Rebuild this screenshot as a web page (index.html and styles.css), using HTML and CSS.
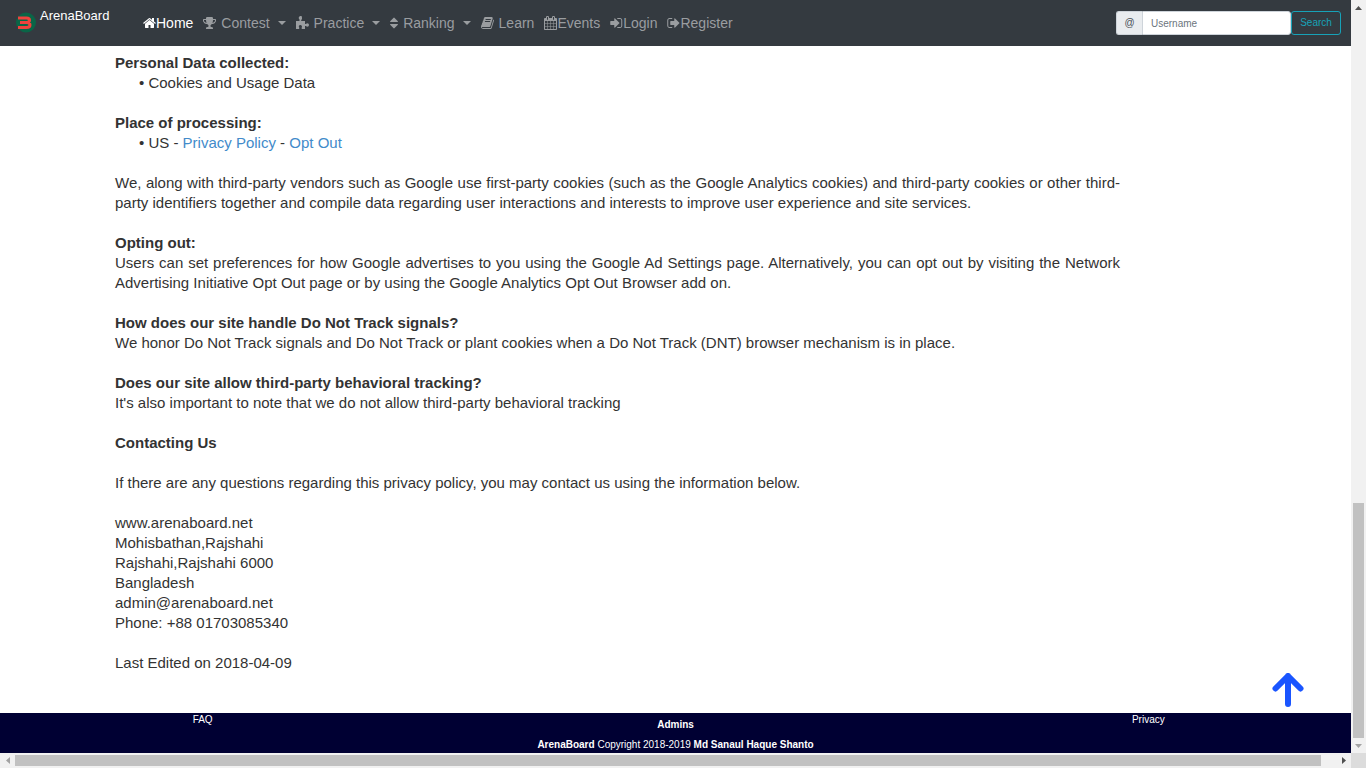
FILE: index.html
```html
<!DOCTYPE html>
<html lang="en">
<head>
<meta charset="utf-8">
<title>ArenaBoard - Privacy Policy</title>
<link rel="stylesheet" href="styles.css">
</head>
<body>
<div class="viewport">
  <div class="page">
    <header class="navbar">
      <a class="brand" href="#">
        <svg class="logo" viewBox="0 0 20 21" aria-hidden="true">
          <circle cx="10" cy="10.500" r="10" fill="#0a6547"/>
          <path d="M0 6h3M0 15h4" stroke="#343a40" stroke-width="1"/>
          <path d="M2 6h8.500q3 0 3 2.200t-3 2.200H4M10.500 10.400q3.500 0 3.500 2.500t-3.500 2.500H2" fill="none" stroke="#f0413d" stroke-width="3"/>
        </svg>
        <span>ArenaBoard</span>
      </a>
      <nav class="menu">
        <a class="item active" href="#"><svg class="icon" viewBox="0 0 1664 1792"><path d="M1408 992v480q0 26-19 45t-45 19h-384v-384h-256v384h-384q-26 0-45-19t-19-45v-480q0-1 .5-3t.5-3l575-474 575 474q1 2 1 6zm223-69l-62 74q-8 9-21 11h-3q-13 0-21-7l-692-577-692 577q-12 8-24 7-13-2-21-11l-62-74q-8-10-7-23.500t11-21.500l719-599q32-26 76-26t76 26l244 204v-195q0-14 9-23t23-9h192q14 0 23 9t9 23v408l219 182q10 8 11 21.500t-7 23.500z"/></svg>Home</a>
        <a class="item spaced" href="#"><svg class="icon" viewBox="64 0 1664 1792"><path d="M522 883q-74-162-74-371h-256v96q0 78 94.500 162t235.500 113zm1078-275v-96h-256q0 209-74 371 141-29 235.500-113t94.500-162zm128-128v128q0 71-41.500 143t-112 130-173 97.500-215.500 44.500q-42 54-95 95-38 34-52.500 72.500t-14.500 89.500q0 54 30.500 91t97.500 37q75 0 133.500 45.500t58.500 114.500v64q0 14-9 23t-23 9h-832q-14 0-23-9t-9-23v-64q0-69 58.500-114.500t133.500-45.500q67 0 97.500-37t30.500-91q0-51-14.500-89.500t-52.500-72.500q-53-41-95-95-113-5-215.500-44.500t-173-97.500-112-130-41.500-143v-128q0-40 28-68t68-28h288v-96q0-66 47-113t113-47h576q66 0 113 47t47 113v96h288q40 0 68 28t28 68z"/></svg>Contest<span class="caret"></span></a>
        <a class="item spaced" href="#"><svg class="icon" viewBox="0 0 13 14"><path d="M0 5h3.500V3.500Q2.700 2.800 2.700 1.800T4.300 0 6 1.800 5.200 3.500V5H9V8h1q.5-.8 1.300-.8Q13 7.200 13 9t-1.700 1.800Q10.500 10.800 10 10H9v3H5.700V11.200Q6.200 10.500 5.700 9.800T4.300 9 3 9.800 3.200 11.200V13H0z"/></svg>Practice<span class="caret"></span></a>
        <a class="item spaced" href="#"><svg class="icon narrow" viewBox="384 0 1024 1792"><path d="M1408 1088q0 26-19 45l-448 448q-19 19-45 19t-45-19l-448-448q-19-19-19-45t19-45 45-19h896q26 0 45 19t19 45zm0-384q0 26-19 45t-45 19h-896q-26 0-45-19t-19-45 19-45l448-448q19-19 45-19t45 19l448 448q19 19 19 45z"/></svg>Ranking<span class="caret"></span></a>
        <a class="item spaced" href="#"><svg class="icon" viewBox="64 0 1664 1792"><path d="M1703 478q40 57 18 129l-275 906q-19 64-76.500 107.500t-122.500 43.500h-923q-77 0-148.500-53.500t-99.500-131.500q-24-67-2-127 0-4 3-27t4-37q1-8-3-21.500t-3-19.500q2-11 8-21t16.500-23.500 16.500-23.500q23-38 45-91.500t30-91.500q3-10 .5-30t-.5-28q3-11 17-28t17-23q21-36 42-92t25-90q1-9-2.500-32t.5-28q4-13 22-30.500t22-22.500q19-26 42.500-84.500t27.500-96.500q1-8-3-25.500t-2-26.500q2-8 9-18t18-23 17-21q8-12 16.500-30.500t15-35 16-36 19.500-32 26.500-23.500 36-11.500 47.500 5.500l-1 3q38-9 51-9h761q74 0 114 56t18 130l-274 906q-36 119-71.500 153.500t-128.500 34.500h-869q-27 0-38 15-11 16-1 43 24 70 144 70h923q29 0 56-15.500t35-41.500l300-987q7-22 5-57 38 15 59 43zm-1064 2q-4 13 2 22.500t20 9.500h608q13 0 25.500-9.500t16.500-22.500l21-64q4-13-2-22.500t-20-9.500h-608q-13 0-25.500 9.500t-16.500 22.500zm-83 256q-4 13 2 22.500t20 9.500h608q13 0 25.500-9.500t16.500-22.500l21-64q4-13-2-22.500t-20-9.500h-608q-13 0-25.500 9.500t-16.500 22.500z"/></svg>Learn</a>
        <a class="item" href="#"><svg class="icon" viewBox="64 0 1664 1792"><path d="M192 1664h288v-288h-288v288zm352 0h320v-288h-320v288zm-352-352h288v-320h-288v320zm352 0h320v-320h-320v320zm-352-384h288v-288h-288v288zm736 736h320v-288h-320v288zm-384-736h320v-288h-320v288zm768 736h288v-288h-288v288zm-384-352h320v-320h-320v320zm-352-864v-288q0-13-9.500-22.500t-22.500-9.500h-64q-13 0-22.500 9.500t-9.500 22.500v288q0 13 9.500 22.500t22.500 9.500h64q13 0 22.500-9.500t9.500-22.500zm736 864h288v-320h-288v320zm-384-384h320v-288h-320v288zm384 0h288v-288h-288v288zm32-480v-288q0-13-9.500-22.500t-22.500-9.500h-64q-13 0-22.500 9.500t-9.500 22.500v288q0 13 9.500 22.500t22.500 9.500h64q13 0 22.500-9.500t9.500-22.500zm384-64v1280q0 52-38 90t-90 38h-1408q-52 0-90-38t-38-90v-1280q0-52 38-90t90-38h128v-96q0-66 47-113t113-47h64q66 0 113 47t47 113v96h384v-96q0-66 47-113t113-47h64q66 0 113 47t47 113v96h128q52 0 90 38t38 90z"/></svg>Events</a>
        <a class="item" href="#"><svg class="icon" viewBox="128 0 1600 1792"><path d="M1312 896q0 26-19 45l-544 544q-19 19-45 19t-45-19-19-45v-288h-448q-26 0-45-19t-19-45v-384q0-26 19-45t45-19h448v-288q0-26 19-45t45-19 45 19l544 544q19 19 19 45zm352-352v704q0 119-84.500 203.500t-203.500 84.500h-320q-13 0-22.500-9.500t-9.500-22.500q0-4-1-20t-.5-26.500 3-23.500 10-19.500 20.500-6.500h320q66 0 113-47t47-113v-704q0-66-47-113t-113-47h-312l-11.500-1-11.500-3-8-5.500-7-9-2-13.500q0-4-1-20t-.5-26.500 3-23.500 10-19.500 20.500-6.500h320q119 0 203.500 84.500t84.500 203.500z"/></svg>Login</a>
        <a class="item" href="#"><svg class="icon" viewBox="64 0 1600 1792"><path d="M704 1440q0 4 1 20t.5 26.500-3 23.500-10 19.500-20.500 6.500h-320q-119 0-203.500-84.500t-84.500-203.500v-704q0-119 84.500-203.500t203.500-84.500h320q13 0 22.500 9.500t9.500 22.500q0 4 1 20t.5 26.500-3 23.500-10 19.500-20.500 6.500h-320q-66 0-113 47t-47 113v704q0 66 47 113t113 47h312l11.500 1 11.500 3 8 5.500 7 9 2 13.500zm928-544q0 26-19 45l-544 544q-19 19-45 19t-45-19-19-45v-288h-448q-26 0-45-19t-19-45v-384q0-26 19-45t45-19h448v-288q0-26 19-45t45-19 45 19l544 544q19 19 19 45z"/></svg>Register</a>
      </nav>
      <form class="search">
        <label class="at" for="username">@</label>
        <input class="field" id="username" type="text" placeholder="Username">
        <button class="submit" type="button">Search</button>
      </form>
    </header>

    <main class="policy">
      <section>
        <h2>Personal Data collected:</h2>
        <p class="bullet">• Cookies and Usage Data</p>
      </section>
      <section>
        <h2>Place of processing:</h2>
        <p class="bullet">• US - <a href="#">Privacy Policy</a> - <a href="#">Opt Out</a></p>
      </section>
      <p>We, along with third-party vendors such as Google use first-party cookies (such as the Google Analytics cookies) and third-party cookies or other third-party identifiers together and compile data regarding user interactions and interests to improve user experience and site services.</p>
      <section>
        <h2>Opting out:</h2>
        <p>Users can set preferences for how Google advertises to you using the Google Ad Settings page. Alternatively, you can opt out by visiting the Network Advertising Initiative Opt Out page or by using the Google Analytics Opt Out Browser add on.</p>
      </section>
      <section>
        <h2>How does our site handle Do Not Track signals?</h2>
        <p>We honor Do Not Track signals and Do Not Track or plant cookies when a Do Not Track (DNT) browser mechanism is in place.</p>
      </section>
      <section>
        <h2>Does our site allow third-party behavioral tracking?</h2>
        <p>It's also important to note that we do not allow third-party behavioral tracking</p>
      </section>
      <h2>Contacting Us</h2>
      <p>If there are any questions regarding this privacy policy, you may contact us using the information below.</p>
      <address>www.arenaboard.net<br>Mohisbathan,Rajshahi<br>Rajshahi,Rajshahi 6000<br>Bangladesh<br>admin@arenaboard.net<br>Phone: +88 01703085340</address>
      <p>Last Edited on 2018-04-09</p>
    </main>

    <a class="to-top" href="#" aria-label="Back to top">
      <svg viewBox="0 0 32 34"><path d="M16 31V3M3.500 15.500L16 3l12.500 12.500" fill="none" stroke="#1a55ff" stroke-width="6" stroke-linecap="round" stroke-linejoin="round"/></svg>
    </a>

    <footer class="footer">
      <div class="links">
        <a href="#">FAQ</a>
        <a class="admins" href="#">Admins</a>
        <a href="#">Privacy</a>
      </div>
      <p class="copyright"><b>ArenaBoard</b> Copyright 2018-2019 <b>Md Sanaul Haque Shanto</b></p>
    </footer>
  </div>

  <div class="bar vertical" aria-hidden="true">
    <span class="arrow"><svg viewBox="0 0 7 4"><path d="M0 4L3.500 0 7 4z" fill="#505050"/></svg></span>
    <span class="track"><span class="thumb"></span></span>
    <span class="arrow"><svg viewBox="0 0 7 4"><path d="M0 0h7L3.500 4z" fill="#a3a3a3"/></svg></span>
  </div>
  <div class="bar horizontal" aria-hidden="true">
    <span class="arrow"><svg viewBox="0 0 4 7"><path d="M4 0v7L0 3.500z" fill="#a3a3a3"/></svg></span>
    <span class="track"><span class="thumb"></span></span>
    <span class="arrow"><svg viewBox="0 0 4 7"><path d="M0 0v7l4-3.500z" fill="#505050"/></svg></span>
  </div>
  <div class="corner"></div>
</div>
</body>
</html>
```
FILE: styles.css
```css
* {
  box-sizing: border-box;
}

body {
  margin: 0;
  color: #333;
  background: #fff;
  font: 15px/20px "Liberation Sans", Arial, sans-serif;
}

h2, p, address {
  margin: 0;
  font: inherit;
}

a {
  text-decoration: none;
}

.viewport {
  display: grid;
  grid-template-columns: minmax(0, 1fr) 15px;
  grid-template-rows: minmax(0, 1fr) 15px;
  height: 100vh;
}

.page {
  position: relative;
  display: flex;
  flex-direction: column;
  overflow: hidden;
}

/* Navigation */
.navbar {
  display: flex;
  flex-shrink: 0;
  height: 46px;
  padding: 0 10px 0 16px;
  background: #343a40;
}

.brand {
  display: flex;
  gap: 4px;
  width: 127px;
  color: #fff;
  font-size: 13px;
  line-height: 16px;
  padding-top: 8px;
}

.logo {
  width: 20px;
  height: 21px;
  margin-top: 4px;
}

.menu {
  display: flex;
  flex: 1;
  align-items: center;
  gap: 10px;
  font-size: 14px;
}

.item {
  display: flex;
  align-items: center;
  color: #9a9da0;
}

.active {
  color: #fff;
}

.spaced {
  gap: 5px;
}

.icon {
  width: 13px;
  height: 14px;
  fill: currentColor;
}

.narrow {
  width: 8px;
}

.caret {
  margin-left: 3px;
  border: 4px solid transparent;
  border-top-color: currentColor;
  border-bottom: 0;
}

.search {
  display: flex;
  align-items: center;
  font-size: 10px;
}

.at {
  width: 26px;
  height: 24px;
  line-height: 22px;
  text-align: center;
  color: #495057;
  background: #e9ecef;
  border: 1px solid #ced4da;
  border-right: 0;
  border-radius: 3px 0 0 3px;
}

.field {
  width: 149px;
  height: 24px;
  padding: 0 8px;
  font: inherit;
  background: #fff;
  border: 1px solid #ced4da;
  border-radius: 0 3px 3px 0;
}

.field::placeholder {
  color: #6c757d;
}

.submit {
  width: 50px;
  height: 24px;
  padding: 0;
  font: inherit;
  color: #17a2b8;
  background: transparent;
  border: 1px solid #17a2b8;
  border-radius: 3px;
}

/* Policy text */
.policy {
  display: flex;
  flex: 1;
  flex-direction: column;
  gap: 20px;
  padding: 7px 231px 0 115px;
  text-align: justify;
}

.policy h2 {
  font-weight: bold;
}

.policy a {
  color: #428bca;
}

.bullet {
  padding-left: 24px;
}

.to-top {
  position: absolute;
  right: 47px;
  bottom: 46px;
  width: 32px;
  height: 34px;
}

.to-top svg {
  display: block;
}

/* Footer */
.footer {
  flex-shrink: 0;
  color: #fff;
  background: #000033;
  font-size: 10px;
  text-align: center;
}

.links {
  display: grid;
  grid-template-columns: 3fr 4fr 3fr;
  line-height: 14px;
}

.links a {
  color: #fff;
}

.links .admins {
  font-weight: bold;
  line-height: 24px;
}

.copyright {
  line-height: 16px;
}

/* Scrollbars */
.bar {
  display: flex;
  background: #f1f1f1;
}

.vertical {
  flex-direction: column;
}

.arrow {
  display: flex;
  flex: 0 0 15px;
  align-items: center;
  justify-content: center;
}

.vertical svg {
  width: 7px;
  height: 4px;
}

.horizontal svg {
  width: 4px;
  height: 7px;
}

.track {
  display: flex;
  flex: 1;
}

.vertical .track {
  align-items: flex-end;
  padding: 0 2px;
}

.horizontal .track {
  padding: 2px 15px 2px 0;
}

.thumb {
  background: #c1c1c1;
}

.vertical .thumb {
  width: 100%;
  height: 32.5%;
}

.horizontal .thumb {
  width: 100%;
}

.corner {
  background: #dcdcdc;
}
```
